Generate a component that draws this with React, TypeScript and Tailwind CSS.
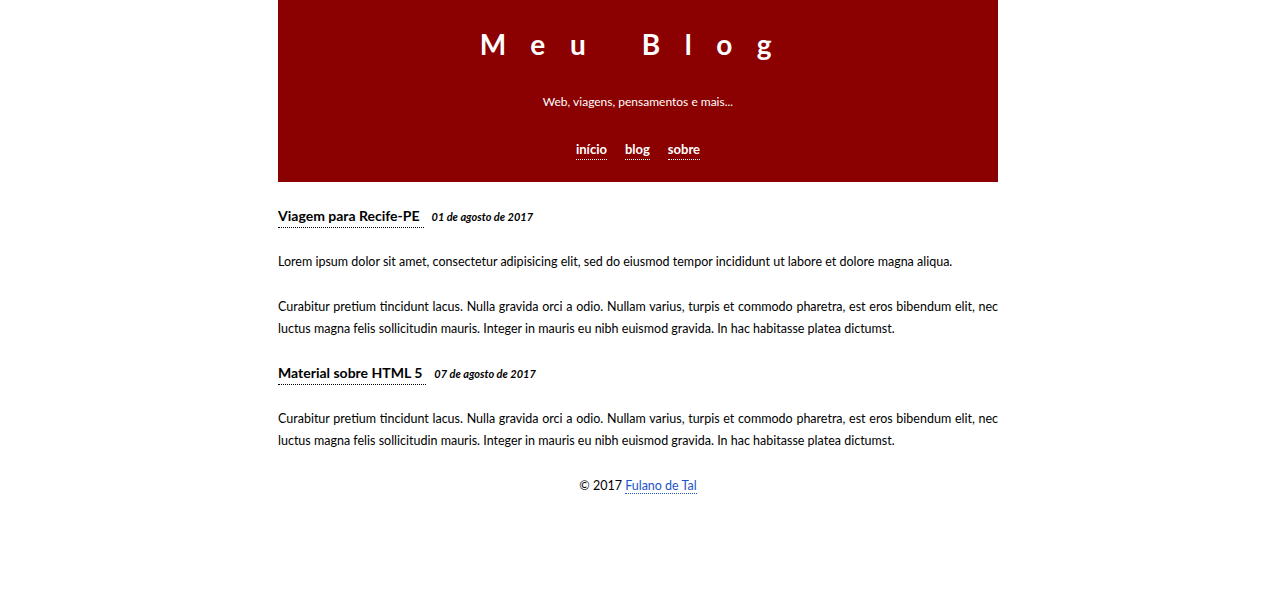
import React from 'react';

const lorem2 =
  'Curabitur pretium tincidunt lacus. Nulla gravida orci a odio. Nullam varius, turpis et commodo pharetra, est eros bibendum elit, nec luctus magna felis sollicitudin mauris. Integer in mauris eu nibh euismod gravida. In hac habitasse platea dictumst.';

const Post: React.FC<{ title: string; date: string; children: React.ReactNode }> = ({ title, date, children }) => (
  <article>
    <h2 className="flex items-baseline h-[22px] text-[14px] leading-[22px]">
      <a href="#" className="font-bold text-black border-b border-dotted border-black pr-1 leading-[22px]">
        {title}
      </a>
      <span className="ml-2 text-[11px] font-bold italic">{date}</span>
    </h2>
    {children}
  </article>
);

export default function App() {
  return (
    <div className="min-h-screen bg-white text-black [font-family:Lato,'Open_Sans',sans-serif]">
      <div className="mx-auto w-[720px] -translate-x-px">
        <header className="bg-[#8b0000] text-white text-center h-[182px] pt-[26px]">
          <h1 className="text-[28px] font-bold leading-[36px] tracking-[0.88em]">Meu Blog</h1>
          <p className="mt-[30px] text-[12px] leading-[20px]">Web, viagens, pensamentos e mais...</p>
          <nav className="mt-[27px] flex justify-center gap-[18px] text-[13px] font-bold leading-[20px]">
            <a href="#" className="border-b border-dotted border-white">início</a>
            <a href="#" className="border-b border-dotted border-white">blog</a>
            <a href="#" className="border-b border-dotted border-white">sobre</a>
          </nav>
        </header>

        <main className="pt-[23px] text-[12.5px] leading-[22px] text-justify">
          <Post title="Viagem para Recife-PE" date="01 de agosto de 2017">
            <p className="mt-[24px]">
              Lorem ipsum dolor sit amet, consectetur adipisicing elit, sed do eiusmod tempor incididunt ut labore et dolore magna aliqua.
            </p>
            <p className="mt-[23px]">{lorem2}</p>
          </Post>
          <div className="mt-[22px]">
            <Post title="Material sobre HTML 5" date="07 de agosto de 2017">
              <p className="mt-[24px]">{lorem2}</p>
            </Post>
          </div>
        </main>

        <footer className="mt-[23px] text-center text-[12.5px] leading-[22px]">
          © 2017{' '}
          <a href="#" className="text-[#1c55c9] border-b border-dotted border-[#1c55c9]">
            Fulano de Tal
          </a>
        </footer>
      </div>
    </div>
  );
}
